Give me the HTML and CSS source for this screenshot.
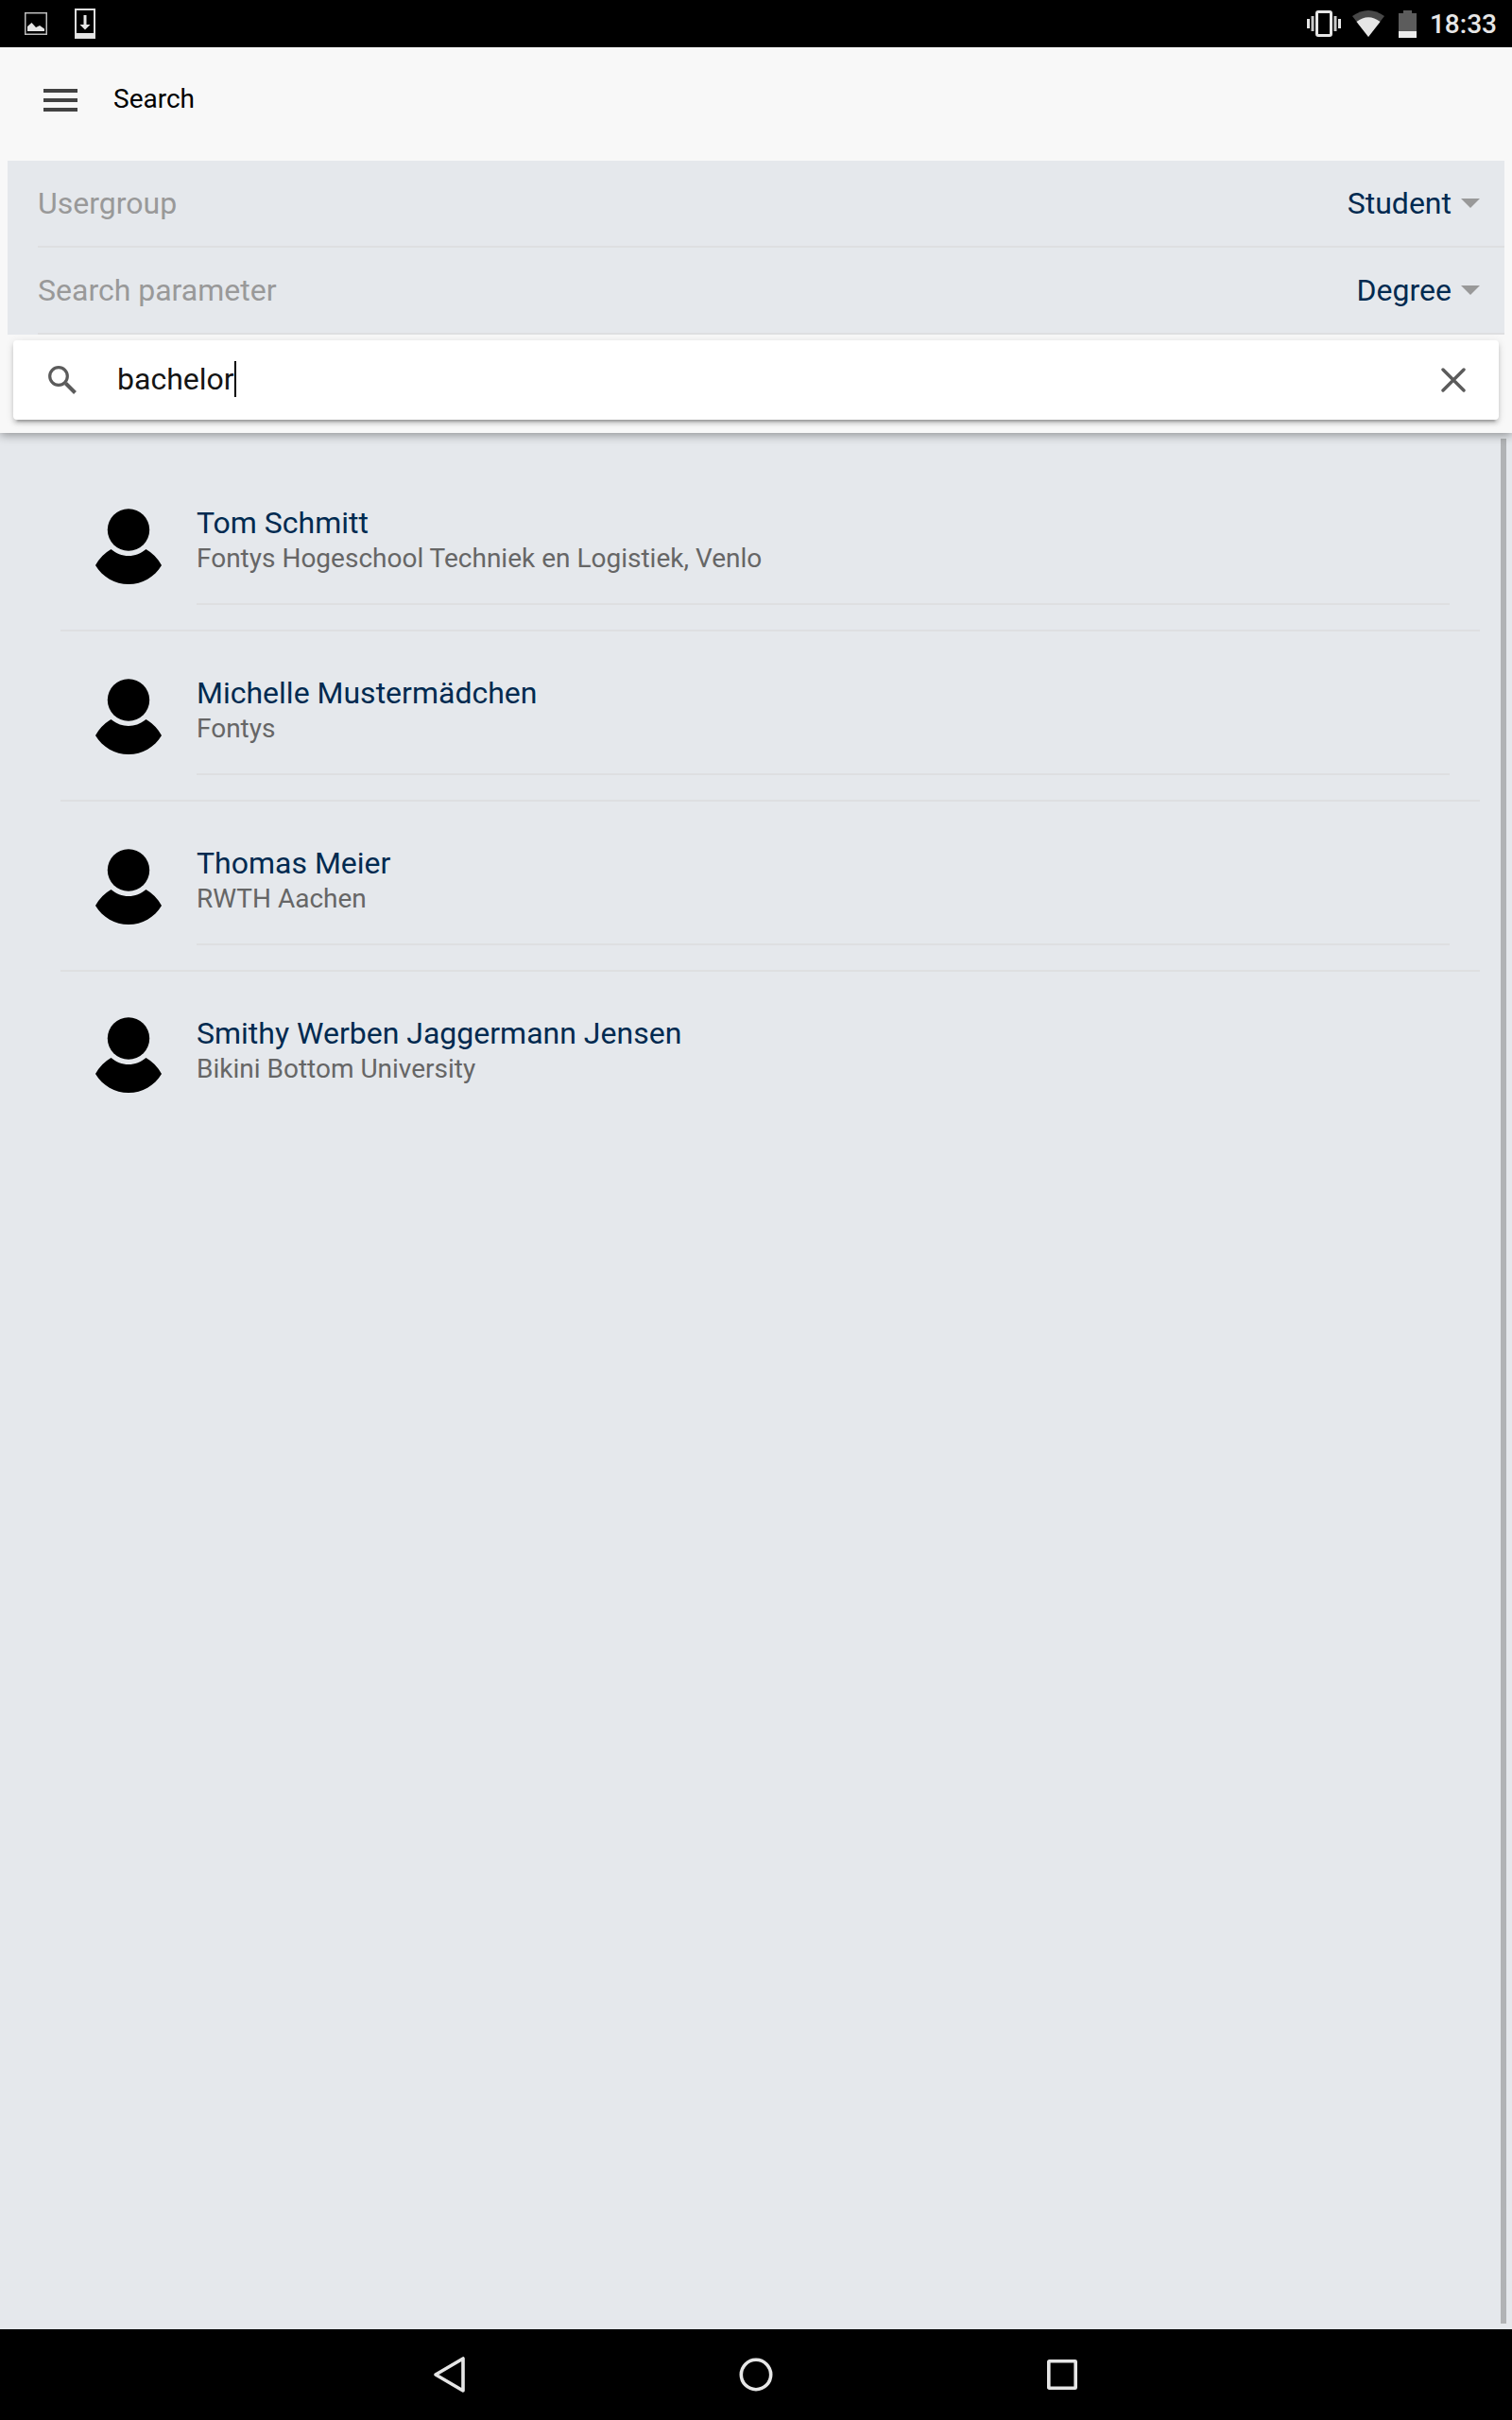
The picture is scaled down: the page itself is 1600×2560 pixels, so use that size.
FILE: index.html
```html
<!DOCTYPE html>
<html lang="en">
<head>
<meta charset="utf-8">
<title>Search</title>
<link rel="stylesheet" href="styles.css">
</head>
<body>
<svg width="0" height="0" class="defs" aria-hidden="true">
  <symbol id="person" viewBox="0 0 80 80">
    <circle cx="40" cy="22.5" r="22.2"/>
    <path d="M21.500 43Q11 49 5 60C12.500 72.500 25.500 80 40 80S67.500 72.500 75 60Q69 49 58.500 43C53 47.500 47 50 40 50S27 47.500 21.500 43Z"/>
  </symbol>
</svg>
<div class="screen">
  <div class="statusbar">
    <div class="status-left">
      <svg width="24" height="24" viewBox="0 0 24 24"><rect x=".75" y=".75" width="22.500" height="22.500" fill="none" stroke="#bdbdbd" stroke-width="1.500"/><path d="M3 20V15L7.500 11L12 16L16 14L21 17.500V20Z" fill="#e6e6e6"/></svg>
      <svg width="22" height="32" viewBox="0 0 22 32"><rect x="1" y="1" width="20" height="30" fill="none" stroke="#dedede" stroke-width="2"/><path d="M1 26H21V31H1ZM9.500 7H12.500V17H16.500L11 22.500L5.500 17H9.500Z" fill="#e6e6e6"/></svg>
    </div>
    <div class="status-right">
      <svg width="36" height="28" viewBox="0 0 36 28"><rect x="10.500" y="1.500" width="15" height="25" rx="1.500" fill="none" stroke="#e6e6e6" stroke-width="3"/><path d="M0 9H3V19H0ZM33 9H36V19H33Z" fill="#e6e6e6"/><path d="M4.500 6H7.500V22H4.500ZM28.500 6H31.500V22H28.500Z" fill="#c8c8c8"/></svg>
      <svg class="wifi" width="34" height="28" viewBox="0 0 34 28"><path d="M0 6Q17-6 34 6L17 28Z" fill="#484848"/><path d="M4.500 12Q17 2.500 29.500 12L17 28Z" fill="#e6e6e6"/></svg>
      <svg class="battery" width="19" height="29" viewBox="0 0 19 29"><path d="M0 3H5V0H14V3H19V22H0Z" fill="#5c5c5c"/><path d="M0 22H19V29H0Z" fill="#ececec"/></svg>
      <span class="clock">18:33</span>
    </div>
  </div>
  <header class="header">
    <div class="titlebar">
      <div class="menu"><i></i><i></i><i></i></div>
      <h1 class="title">Search</h1>
    </div>
    <div class="filters">
      <div class="filter"><span class="filter-label">Usergroup</span><span class="filter-value">Student</span><i class="caret"></i></div>
      <div class="filter"><span class="filter-label">Search parameter</span><span class="filter-value">Degree</span><i class="caret"></i></div>
    </div>
    <div class="searchbox">
      <svg width="30" height="30" viewBox="0 0 30 30"><circle cx="11" cy="11" r="9.300" fill="none" stroke="#5b5b5b" stroke-width="3.200"/><path d="M18.500 18.500L28.500 28.500" stroke="#5b5b5b" stroke-width="4"/></svg>
      <span class="query">bachelor</span><i class="cursor"></i>
      <svg class="clear" width="26" height="26" viewBox="0 0 26 26"><path d="M2 2L24 24M24 2L2 24" stroke="#5b5b5b" stroke-width="3.400" stroke-linecap="round"/></svg>
    </div>
  </header>
  <main class="content">
    <ul class="results">
      <li class="result"><svg class="avatar"><use href="#person"/></svg><div class="info"><h2>Tom Schmitt</h2><p>Fontys Hogeschool Techniek en Logistiek, Venlo</p></div></li>
      <li class="result"><svg class="avatar"><use href="#person"/></svg><div class="info"><h2>Michelle Mustermädchen</h2><p>Fontys</p></div></li>
      <li class="result"><svg class="avatar"><use href="#person"/></svg><div class="info"><h2>Thomas Meier</h2><p>RWTH Aachen</p></div></li>
      <li class="result"><svg class="avatar"><use href="#person"/></svg><div class="info"><h2>Smithy Werben Jaggermann Jensen</h2><p>Bikini Bottom University</p></div></li>
    </ul>
    <div class="scrollbar"></div>
  </main>
  <nav class="navbar">
    <svg width="40" height="40" viewBox="0 0 40 40"><path d="M34 3V37L5 20Z"/></svg>
    <svg width="40" height="40" viewBox="0 0 40 40"><circle cx="20" cy="20" r="15.700"/></svg>
    <svg width="40" height="40" viewBox="0 0 40 40"><rect x="5.800" y="5.800" width="28.400" height="28.400" rx=".5"/></svg>
  </nav>
</div>
</body>
</html>
```
FILE: styles.css
```css
* { box-sizing: border-box; margin: 0; padding: 0; }
body { font-family: Roboto, sans-serif; font-weight: 400; background: #e5e8ec; }
svg { display: block; flex: none; }
.defs { position: absolute; }
.screen { display: flex; flex-direction: column; width: 1600px; height: 2560px; }

.statusbar { display: flex; justify-content: space-between; height: 50px; background: #000; }
.status-left, .status-right { display: flex; align-items: center; }
.status-left { gap: 29px; padding-left: 26px; }
.status-right { padding-right: 16px; }
.wifi { margin-left: 12px; }
.battery { margin: 0 14px 0 15px; }
.clock { font-size: 28px; font-weight: 500; line-height: 50px; color: #e6e6e6; padding-top: 2px; }

.header { position: relative; height: 408px; padding: 0 8px; background: #f8f8f8; box-shadow: 0 2px 10px rgba(0, 0, 0, .4); clip-path: inset(0 0 -14px 0); }
.titlebar { display: flex; align-items: center; height: 112px; margin-bottom: 8px; gap: 38px; padding-left: 38px; }
.menu { display: flex; flex-direction: column; gap: 6px; }
.menu i { width: 36px; height: 4px; background: #424242; }
.title { padding-bottom: 3px; font-size: 28px; font-weight: 400; line-height: 32px; color: #000; }

.filters { background: #e5e8ec; }
.filter { display: flex; align-items: center; height: 92px; margin-left: 32px; padding-right: 26px; border-bottom: 2px solid #dedfe1; font-size: 32px; line-height: 40px; }
.filter-label { flex: 1; color: #999; }
.filter-value { color: #002a50; }
.caret { margin-left: 10px; border: solid transparent; border-width: 10px 10px 0; border-top-color: #999; }

.searchbox { display: flex; align-items: center; height: 84px; margin: 6px 6px 0; padding: 0 35px 0 37px; background: #fff; border-radius: 4px; box-shadow: 0 4px 4px rgba(0, 0, 0, .14), 0 6px 2px -4px rgba(0, 0, 0, .2), 0 2px 10px rgba(0, 0, 0, .12); }
.query { margin-left: 43px; padding-bottom: 2px; font-size: 32px; line-height: 40px; color: #141414; }
.cursor { width: 2px; height: 38px; margin-bottom: 2px; background: #000; }
.clear { margin-left: auto; }

.content { display: flex; flex: 1; justify-content: space-between; }
.results { width: 1566px; padding: 30px 0 0 64px; list-style: none; }
.result { display: flex; height: 180px; padding: 50px 32px 26px; border-bottom: 2px solid #dedfe1; }
.result:last-child { padding-top: 48px; border-bottom: 0; }
.avatar { width: 80px; height: 80px; }
.info { flex: 1; margin-left: 32px; border-bottom: 2px solid #dedfe1; }
.result:last-child .info { padding-top: 2px; border-bottom: 0; }
.info h2 { margin: -4px 0 2px; font-size: 32px; font-weight: 400; line-height: 38px; color: #002a50; }
.info p { font-size: 28px; line-height: 34px; color: #666; }
.scrollbar { width: 6px; margin: 6px 6px 6px 0; background: #b1b3b5; }

.navbar { display: flex; justify-content: center; align-items: center; gap: 284px; height: 96px; background: #000; }
.navbar svg { fill: none; stroke: #e6e6e6; stroke-width: 3.600; stroke-linejoin: round; }
```
